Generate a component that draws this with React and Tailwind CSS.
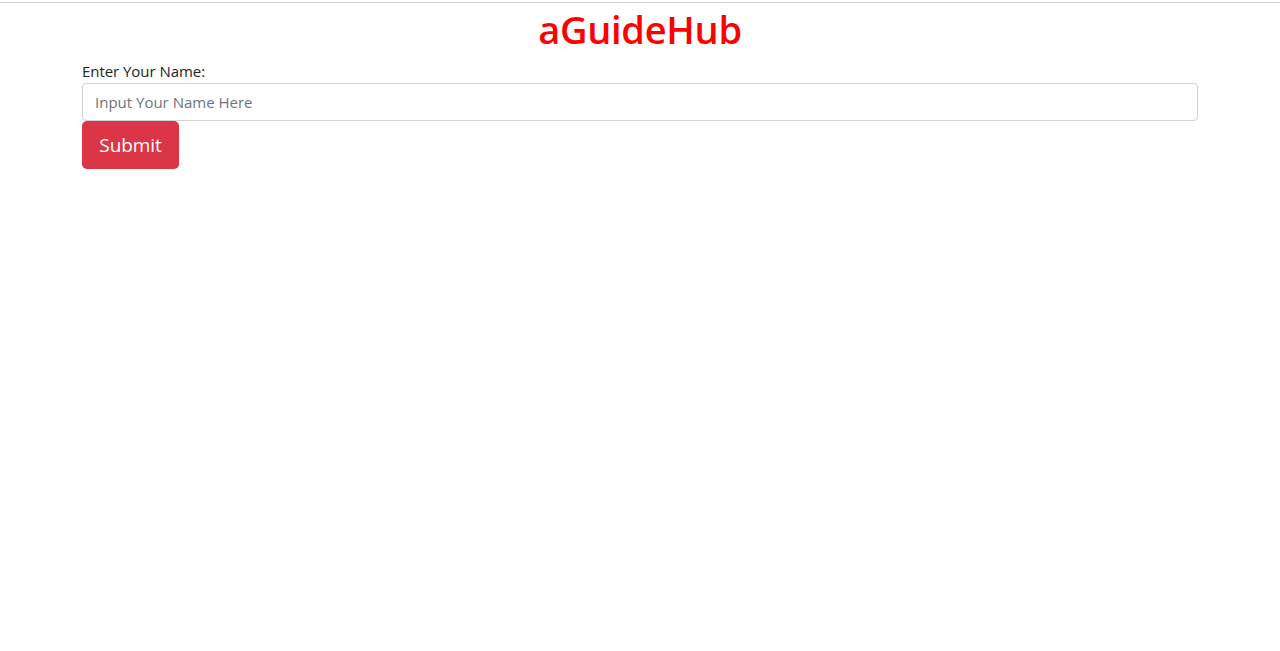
import React from "react";

export default function App() {
  return (
    <div className="min-h-[651px] bg-white text-[#212529]" style={{ fontFamily: '"Open Sans", "Noto Sans", Arial, sans-serif' }}>
      <div className="pt-[2px]">
        <div className="border-t border-[#cfcfcf]" />
      </div>
      <div className="mx-auto w-[1140px] px-[12px]">
        <h1 className="mb-[8px] pt-[2px] h-[48px] text-center text-[38px] leading-[48px] font-semibold text-[#ff0000] tracking-[-0.3px]">
          aGuideHub
        </h1>
        <form onSubmit={(e) => e.preventDefault()}>
          <label className="block text-[15px] leading-[24px] tracking-[-0.05px]">Enter Your Name:</label>
          <input
            type="text"
            placeholder="Input Your Name Here"
            className="block h-[38px] w-full rounded-[4px] border border-[#ced4da] px-[12px] text-[15px] tracking-[0px] outline-none placeholder:text-[#6c757d]"
          />
          <button
            type="submit"
            className="h-[48px] w-[97px] rounded-[5px] bg-[#dc3545] text-[19px] text-white tracking-[-0.1px]"
          >
            Submit
          </button>
        </form>
      </div>
    </div>
  );
}
